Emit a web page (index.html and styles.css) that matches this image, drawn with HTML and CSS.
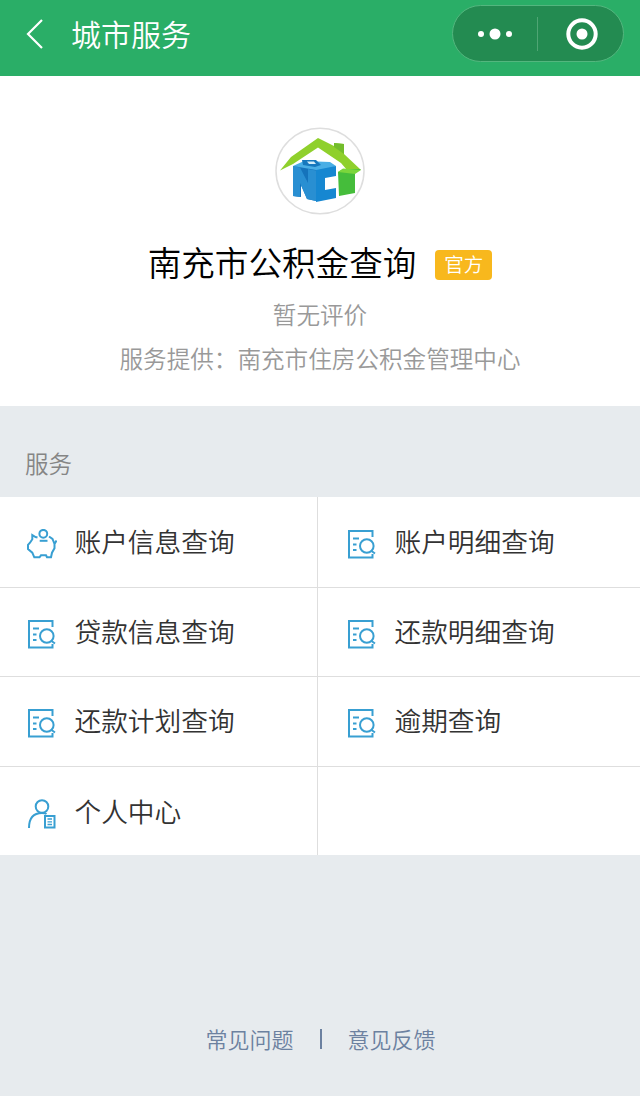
FILE: index.html
```html
<!DOCTYPE html>
<html lang="zh-CN">
	<head>
		<meta charset="utf-8">
		<title>城市服务</title>
		<link rel="stylesheet" href="styles.css">
	</head>
	<body>
		<!-- shared icons -->
		<svg class="sprite">
			<symbol id="icon-search" viewBox="0 0 30 30">
				<path d="M25.500 8V2H2V28.500H25.500V25"/>
				<path d="M6 9.500H12M6 15.500H9.500M6 21H9.500"/>
				<circle cx="19.800" cy="17" r="6.800"/>
				<path d="M24.500 22L28 24.500"/>
			</symbol>
		</svg>

		<header class="navbar">
			<svg class="back" viewBox="0 0 18 32"><path d="M16 2L2 16L16 30"/></svg>
			<h1 class="navbar-title">城市服务</h1>
			<div class="capsule">
				<svg class="capsule-icon" viewBox="0 0 84 54">
					<circle cx="28" cy="27" r="3"/>
					<circle cx="42" cy="27" r="5.500"/>
					<circle cx="56" cy="27" r="3"/>
				</svg>
				<span class="capsule-line"></span>
				<svg class="capsule-icon" viewBox="0 0 84 54">
					<circle class="ring" cx="44" cy="27" r="13.700"/>
					<circle cx="44" cy="27" r="5.500"/>
				</svg>
			</div>
		</header>

		<section class="profile">
			<svg class="logo" viewBox="0 0 90 88">
				<ellipse cx="45" cy="44" rx="44" ry="42.800" fill="#fff" stroke="#dedede" stroke-width="1.500"/>
				<path d="M5 43.500L16 30L43 11L59 19V16L69 17V27L86 43H72L66 36L43 20.500L18 37Z" fill="#8fd02c"/>
				<path d="M59 16L69 17V27L59 20Z" fill="#73bd2c"/>
				<path d="M63 45L68 42H86L80 46V66L64 69Z" fill="#45bd3b"/>
				<path d="M63 45L68 41.500L86 43L80 47Z" fill="#7bd63c"/>
				<path d="M18 39L29 34L55 35L61 39L48 45H41Z" fill="#49aee5"/>
				<path d="M18 39L41 43V74L32 72L26 58V70L18 69Z" fill="#1573bb"/>
				<path d="M18 39L25 40.500L33 56V42L41 43.500V74L32 72L25 56V70L18 69Z" fill="#298fd2"/>
				<path d="M41 43L61 39V49L50 51V63L61 61V71L41 75Z" fill="#1687d1"/>
				<path d="M27 33H41L46 38L40 40L28 38Z" fill="#1678bd"/>
				<path d="M32 34.500H39L41 37H34Z" fill="#d3edfa"/>
			</svg>
			<div class="profile-name">
				<h2>南充市公积金查询</h2>
				<span class="badge">官方</span>
			</div>
			<p class="rating">暂无评价</p>
			<p class="provider">服务提供：南充市住房公积金管理中心</p>
		</section>

		<h3 class="section-title">服务</h3>
		<nav class="services">
			<a class="service">
				<svg class="icon" viewBox="0 0 30 30">
					<circle cx="16.300" cy="4.800" r="3.900"/>
					<path d="M12.700 11.800H20.500"/>
					<path d="M10.500 8.500L8.500 8L5.300 6V10.300L3 13.700L1 15.800V20L5.300 23.700L7.300 28.300H12.500L14 26.300H19L20 28.300H24L25 23.700L27.500 19.300V15L29.500 11.500M22 7.500L25.500 10L27.500 15"/>
				</svg>
				账户信息查询
			</a>
			<a class="service"><svg class="icon"><use href="#icon-search"/></svg>账户明细查询</a>
			<a class="service"><svg class="icon"><use href="#icon-search"/></svg>贷款信息查询</a>
			<a class="service"><svg class="icon"><use href="#icon-search"/></svg>还款明细查询</a>
			<a class="service"><svg class="icon"><use href="#icon-search"/></svg>还款计划查询</a>
			<a class="service"><svg class="icon"><use href="#icon-search"/></svg>逾期查询</a>
			<a class="service">
				<svg class="icon" viewBox="0 0 30 30">
					<circle cx="15" cy="7.500" r="6.300"/>
					<path d="M2 29C2 19 7 14 15 14Q18 14 19.500 15"/>
					<path d="M18 17H27.500V28.500H18Z"/>
					<path class="thin" d="M20.500 20H25M20.500 22.800H25M20.500 25.500H25"/>
				</svg>
				个人中心
			</a>
			<span class="service"></span>
		</nav>

		<footer class="footer">
			<a>常见问题</a>
			<span class="footer-line"></span>
			<a>意见反馈</a>
		</footer>
	</body>
</html>
```

FILE: styles.css
```css
* {
	box-sizing: border-box;
}
body {
	display: flex;
	flex-direction: column;
	height: 1096px;
	margin: 0;
	background-color: #e7ebee;
	font-family: "Noto Sans CJK SC", sans-serif;
	font-weight: 350;
}
h1, h2, h3, p {
	margin: 0;
	font-weight: 350;
}
.sprite {
	display: none;
}
.navbar {
	display: flex;
	align-items: center;
	height: 76px;
	padding: 0 16px 9px 26px;
	background-color: #2aae67;
	color: #fff;
}
.back {
	width: 18px;
	height: 32px;
	fill: none;
	stroke: #fff;
	stroke-width: 2.2;
}
.navbar-title {
	margin-left: 27px;
	padding-bottom: 2px;
	font-size: 30px;
	line-height: 64px;
}
.capsule {
	display: flex;
	align-items: center;
	width: 172px;
	height: 57px;
	margin-left: auto;
	border: 1.5px solid #53b67e;
	border-radius: 29px;
	background-color: #238b51;
}
.capsule-icon {
	width: 84px;
	height: 54px;
	fill: #fff;
}
.capsule-icon .ring {
	fill: none;
	stroke: #fff;
	stroke-width: 4;
}
.capsule-line {
	width: 1px;
	height: 34px;
	background-color: #4fa574;
}
.profile {
	display: flex;
	flex-direction: column;
	align-items: center;
	height: 330px;
	padding-top: 51px;
	background-color: #fff;
	color: #999;
	font-size: 23.6px;
}
.logo {
	width: 90px;
	height: 88px;
}
.profile-name {
	display: flex;
	align-items: center;
	gap: 19px;
	height: 50px;
	margin-top: 25px;
}
.profile-name h2 {
	padding-bottom: 6px;
	color: #000;
	font-size: 33.6px;
	line-height: 44px;
}
.badge {
	width: 57px;
	height: 30px;
	border-radius: 4px;
	background-color: #f8b81d;
	color: #fff;
	font-size: 19.5px;
	line-height: 28px;
	text-align: center;
}
.rating {
	margin-top: 2px;
	line-height: 44px;
}
.provider {
	line-height: 44px;
}
.section-title {
	height: 91px;
	padding: 35px 25px 0;
	color: #858585;
	font-size: 23.6px;
	line-height: 44px;
}
.services {
	display: grid;
	grid-template-columns: 318px 322px;
	grid-template-rows: 91px 89px 90px 88px;
}
.service {
	display: flex;
	align-items: center;
	gap: 17.5px;
	padding: 0 0 4px 27px;
	border-bottom: 1px solid #dedede;
	background-color: #fff;
	color: #333;
	font-size: 26.7px;
}
.service:nth-child(odd) {
	border-right: 1px solid #dedede;
}
.service:nth-child(even) {
	padding-left: 29px;
}
.service:nth-child(n+7) {
	padding-bottom: 2px;
	border-bottom: 0;
}
.icon {
	width: 30px;
	height: 30px;
	margin-top: 7px;
	fill: none;
	stroke: #389fd2;
	stroke-width: 2;
}
.icon .thin {
	stroke-width: 1.3;
}
.footer {
	display: flex;
	justify-content: center;
	align-items: center;
	gap: 26px;
	margin-top: auto;
	padding: 0 0 41px 1px;
	color: #6c81a0;
	font-size: 22px;
}
.footer a {
	padding-bottom: 1px;
}
.footer-line {
	width: 2px;
	height: 20px;
	background-color: #6c81a0;
}
```
